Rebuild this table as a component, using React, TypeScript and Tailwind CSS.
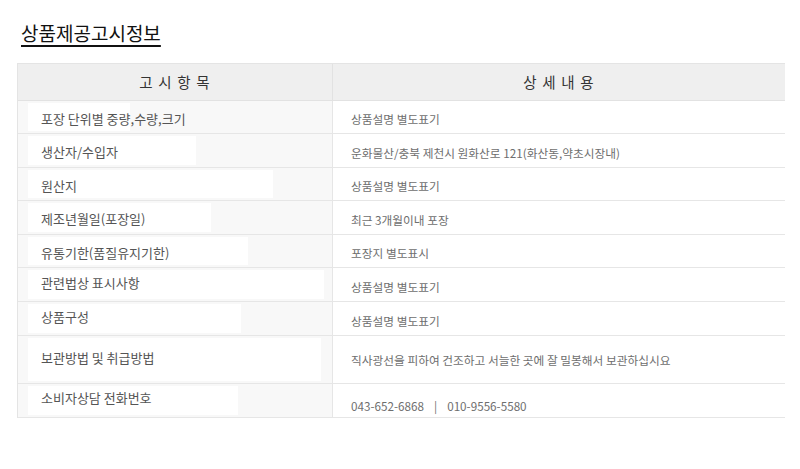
import React from "react";

const rows: { k: string; v: React.ReactNode; h: number; pw: number; lpt: number; lpb: number; rpt: number }[] = [
  { k: "포장 단위별 중량,수량,크기", v: "상품설명 별도표기", h: 33, pw: 102, lpt: 4, lpb: 0, rpt: 4 },
  { k: "생산자/수입자", v: "운화물산/충북 제천시 원화산로 121(화산동,약초시장내)", h: 34, pw: 168, lpt: 3, lpb: 0, rpt: 4 },
  { k: "원산지", v: "상품설명 별도표기", h: 33, pw: 245, lpt: 3, lpb: 0, rpt: 4 },
  { k: "제조년월일(포장일)", v: "최근 3개월이내 포장", h: 34, pw: 183, lpt: 2, lpb: 0, rpt: 4 },
  { k: "유통기한(품질유지기한)", v: "포장지 별도표시", h: 33, pw: 220, lpt: 3, lpb: 0, rpt: 4 },
  { k: "관련법상 표시사항", v: "상품설명 별도표기", h: 34, pw: 296, lpt: 0, lpb: 4, rpt: 4 },
  { k: "상품구성", v: "상품설명 별도표기", h: 34, pw: 213, lpt: 0, lpb: 4, rpt: 4 },
  { k: "보관방법 및 취급방법", v: "직사광선을 피하여 건조하고 서늘한 곳에 잘 밀봉해서 보관하십시요", h: 48, pw: 293, lpt: 0, lpb: 4, rpt: 0 },
  {
    k: "소비자상담 전화번호",
    v: (
      <>
        043-652-6868<span className="mx-[10px]">|</span>010-9556-5580
      </>
    ),
    h: 34,
    pw: 210,
    lpt: 0,
    lpb: 6,
    rpt: 10,
  },
];

export default function App() {
  return (
    <div
      className="w-[800px] h-[469px] bg-white overflow-hidden"
      style={{ fontFamily: '"Noto Sans CJK KR", "Noto Sans", sans-serif' }}
    >
      <div className="pl-[21px] pt-[21px] h-[63px]">
        <span className="text-[19px] leading-[24px] text-[#111] underline decoration-[2px] underline-offset-[4px]">
          상품제공고시정보
        </span>
      </div>
      <div className="ml-[17px] w-[768px] border-l border-r border-t border-[#e4e4e4] grid grid-cols-[315px_452px]">
        <div className="h-[37px] bg-[#efefef] border-b border-r border-[#e2e2e2] flex items-center justify-center text-[14.5px] text-[#333] tracking-[1.2px]">
          고 시 항 목
        </div>
        <div className="h-[37px] bg-[#efefef] border-b border-[#e2e2e2] flex items-center justify-center text-[14.5px] text-[#333] tracking-[1.2px]">
          상 세 내 용
        </div>
        {rows.map((r) => (
          <React.Fragment key={r.k}>
            <div
              className="bg-[#f8f8f8] border-b border-r border-[#e6e6e6] pl-[10px] py-[2px] flex"
              style={{ height: r.h }}
            >
              <div
                className="bg-white h-full flex items-center pl-[13px] text-[13px] text-[#555] whitespace-nowrap"
                style={{ width: r.pw, paddingTop: r.lpt, paddingBottom: r.lpb }}
              >
                {r.k}
              </div>
            </div>
            <div
              className="bg-white border-b border-[#e6e6e6] pl-[18px] flex items-center text-[11.7px] text-[#6e6e6e] whitespace-pre"
              style={{ height: r.h, paddingTop: r.rpt }}
            >
              {r.v}
            </div>
          </React.Fragment>
        ))}
      </div>
    </div>
  );
}
